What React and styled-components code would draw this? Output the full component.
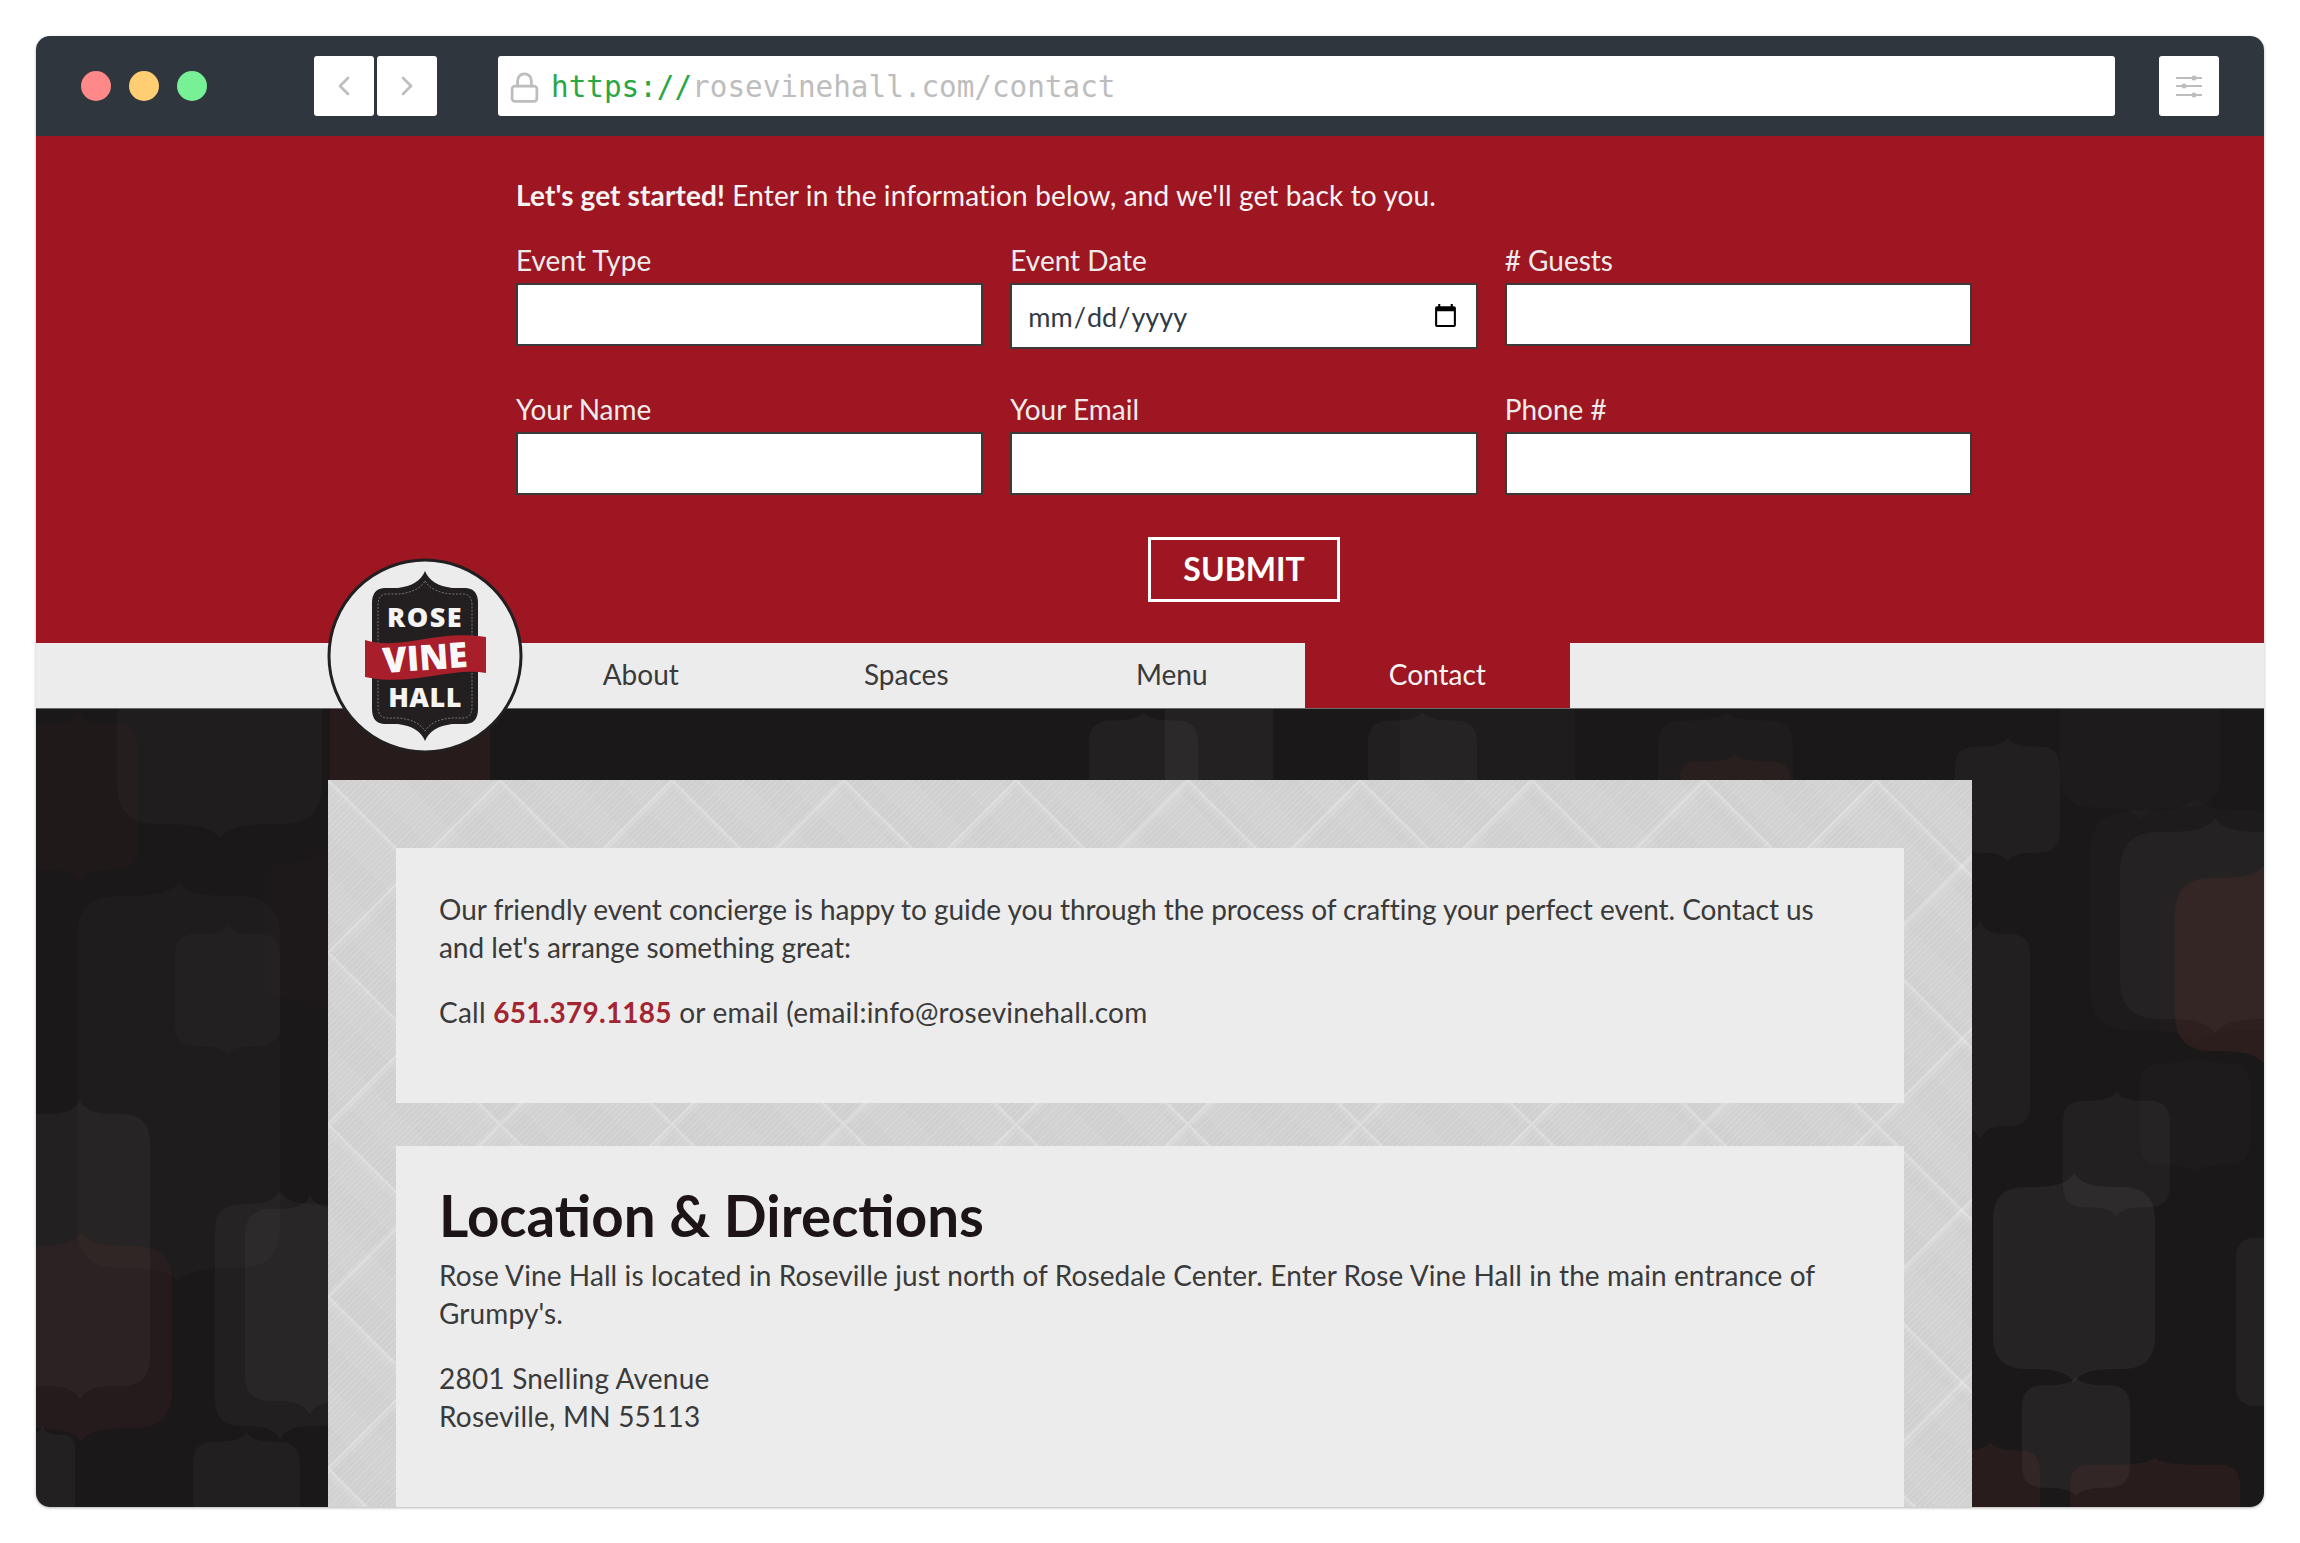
import React from "react"
import styled, { createGlobalStyle } from "styled-components"
import { ChevronLeft, ChevronRight, Lock } from "lucide-react"

const bodyFont = `"Lato", "Noto Sans", sans-serif`

const GlobalStyle = createGlobalStyle`
  html, body {
    margin: 0;
    padding: 0;
    background: #fff;
    font-family: ${bodyFont};
  }
  * {
    box-sizing: border-box;
  }
`

const Page = styled.div`
  width: 2300px;
  height: 1543px;
  padding: 36px;
  background: #fff;
`

const BrowserWindow = styled.div`
  display: flex;
  flex-direction: column;
  width: 2228px;
  height: 1471px;
  border-radius: 14px;
  overflow: hidden;
  box-shadow: 0 1px 3px rgba(0, 0, 0, 0.3);
`

const TitleBar = styled.div`
  display: flex;
  align-items: center;
  flex: 0 0 100px;
  padding: 0 45px;
  background: #2f363e;
`

const Lights = styled.div`
  display: flex;
  gap: 18px;
  margin-right: 107px;
`

const Light = styled.span`
  width: 30px;
  height: 30px;
  border-radius: 50%;
  background: ${props => props.color};
`

const NavButtons = styled.div`
  display: flex;
  gap: 3px;
  margin-right: 61px;
`

const ToolButton = styled.div`
  display: flex;
  align-items: center;
  justify-content: center;
  width: 60px;
  height: 60px;
  border-radius: 3px;
  background: #fff;
  color: #bdbdbd;
`

const AddressBar = styled.div`
  display: flex;
  align-items: center;
  flex: 1;
  height: 60px;
  margin-right: 44px;
  padding: 2px 0 0 10px;
  border-radius: 3px;
  background: #fff;
  color: #bdbdbd;
  font-family: "DejaVu Sans Mono", monospace;
  font-size: 29.3px;
  white-space: nowrap;
`

const Scheme = styled.span`
  margin-left: 10px;
  color: #27a844;
`

const FormSection = styled.section`
  flex: 0 0 507px;
  padding: 40px 292px 0 480px;
  background: #9e1622;
  color: #ececec;
`

const Intro = styled.p`
  margin: 0 0 27px;
  font-size: 28px;
  line-height: 38px;
  letter-spacing: 0.13px;
  color: #f4f4f4;
`

const FieldGrid = styled.div`
  display: grid;
  grid-template-columns: repeat(3, 1fr);
  column-gap: 27px;
  row-gap: 44px;
`

const Field = styled.label`
  display: flex;
  flex-direction: column;
  gap: 4px;
  font-size: 28px;
  line-height: 38px;
`

const TextInput = styled.input`
  width: 100%;
  height: ${props => (props.type === "date" ? "66px" : "63px")};
  margin-bottom: ${props => (props.type === "date" ? "-3px" : "0")};
  padding: 0 15px;
  border: 2px solid #3a3a3a;
  border-radius: 0;
  outline: none;
  background: #fff;
  color: #2f3a48;
  font-family: ${bodyFont};
  font-size: ${props => (props.type === "date" ? "27px" : "28px")};
`

const SubmitRow = styled.div`
  display: flex;
  justify-content: center;
  margin-top: 42px;
`

const SubmitButton = styled.button`
  width: 192px;
  height: 65px;
  padding: 0 0 3px;
  border: 3px solid #fff;
  background: transparent;
  color: #fff;
  font-family: ${bodyFont};
  font-size: 32px;
  font-weight: 700;
`

const NavBar = styled.nav`
  position: relative;
  display: flex;
  flex: 0 0 66px;
  padding-left: 472px;
  border-bottom: 1px solid #6a6a6a;
  background: #ececec;
`

const NavItem = styled.a`
  display: flex;
  align-items: center;
  justify-content: center;
  width: 265.5px;
  padding-bottom: 3px;
  font-size: 28px;
  color: ${props => (props.$active ? "#f4f4f4" : "#3a3a3a")};
  background: ${props => (props.$active ? "#9e1622" : "transparent")};
`

const LogoBadge = styled.svg`
  position: absolute;
  left: 290px;
  top: -86px;
  width: 198px;
  height: 198px;
  z-index: 2;
`

const Content = styled.main`
  position: relative;
  flex: 1;
  padding: 71px 292px 0;
  background: #1b1819;
  overflow: hidden;
`

const Backdrop = styled.svg`
  position: absolute;
  left: 0;
  top: 0;
  width: 2228px;
  height: 798px;
`

const Panel = styled.div`
  position: relative;
  display: flex;
  flex-direction: column;
  gap: 43px;
  height: 900px;
  padding: 68px;
  background-color: #d0d0d0;
  background-image:
    linear-gradient(45deg, transparent 46%, rgba(255, 255, 255, 0.1) 49%, rgba(255, 255, 255, 0.28) 50%, transparent 50.8%),
    linear-gradient(-45deg, transparent 46%, rgba(255, 255, 255, 0.1) 49%, rgba(255, 255, 255, 0.28) 50%, transparent 50.8%),
    repeating-linear-gradient(-45deg, rgba(255, 255, 255, 0.14) 0 1px, transparent 1px 4px),
    repeating-linear-gradient(45deg, rgba(255, 255, 255, 0.05) 0 30px, transparent 30px 60px);
  background-size: 172px 172px, 172px 172px, auto, auto;
`

const Card = styled.article`
  flex: 0 0 ${props => props.height};
  padding: ${props => props.$top} 43px 0;
  background: #ececec;
  color: #3a3a3a;
  font-size: 28px;
  line-height: 38px;
`

const Paragraph = styled.p`
  margin: 0 0 27px;
  letter-spacing: ${props => props.$spacing || "0"};
`

const Phone = styled.strong`
  color: #a32530;
  font-weight: 700;
`

const Heading = styled.h2`
  margin: 0 0 10px;
  color: #1c1416;
  font-size: 56.5px;
  font-weight: 700;
  line-height: 62px;
`

const lantern = (x, y, w, h) => {
  const cx = x + w / 2
  const r = Math.min(w, h) * 0.2
  const tip = Math.min(h * 0.07, 14)
  const top = y + tip
  const bottom = y + h - tip
  return [
    `M${cx} ${y}`,
    `C${cx + w * 0.04} ${top - 2} ${cx + w * 0.14} ${top} ${cx + w * 0.28} ${top}`,
    `L${x + w - r} ${top}`,
    `Q${x + w} ${top} ${x + w} ${top + r}`,
    `L${x + w} ${bottom - r}`,
    `Q${x + w} ${bottom} ${x + w - r} ${bottom}`,
    `L${cx + w * 0.28} ${bottom}`,
    `C${cx + w * 0.14} ${bottom} ${cx + w * 0.04} ${bottom + 2} ${cx} ${y + h}`,
    `C${cx - w * 0.04} ${bottom + 2} ${cx - w * 0.14} ${bottom} ${cx - w * 0.28} ${bottom}`,
    `L${x + r} ${bottom}`,
    `Q${x} ${bottom} ${x} ${bottom - r}`,
    `L${x} ${top + r}`,
    `Q${x} ${top} ${x + r} ${top}`,
    `L${cx - w * 0.28} ${top}`,
    `C${cx - w * 0.14} ${top} ${cx - w * 0.04} ${top - 2} ${cx} ${y}`,
    "Z",
  ].join(" ")
}

const GREY = "#ffffff"
const RED = "#a8463c"

// page coordinates of the faint lantern shapes behind the panel
const shapes = [
  [20, 712, 118, 170, RED, 0.035],
  [117, 640, 205, 198, GREY, 0.025],
  [77, 882, 203, 400, GREY, 0.02],
  [175, 925, 105, 130, GREY, 0.02],
  [263, 850, 120, 160, RED, 0.02],
  [10, 1100, 140, 300, GREY, 0.035],
  [-10, 1232, 182, 210, RED, 0.08],
  [215, 1190, 130, 250, GREY, 0.03],
  [245, 1195, 130, 220, GREY, 0.035],
  [193, 1432, 107, 140, GREY, 0.03],
  [10, 1425, 65, 140, GREY, 0.035],
  [330, 660, 160, 200, RED, 0.09],
  [1089, 712, 109, 120, GREY, 0.035],
  [1165, 650, 108, 180, GREY, 0.045],
  [1368, 712, 109, 120, GREY, 0.03],
  [1400, 640, 175, 190, GREY, 0.02],
  [1658, 712, 135, 120, GREY, 0.02],
  [1680, 755, 110, 90, RED, 0.07],
  [1955, 738, 105, 123, GREY, 0.03],
  [2060, 640, 160, 180, GREY, 0.015],
  [2090, 797, 210, 247, GREY, 0.015],
  [2120, 818, 190, 215, GREY, 0.03],
  [2175, 864, 180, 201, RED, 0.12],
  [2140, 1055, 110, 118, GREY, 0.015],
  [2063, 1092, 107, 124, GREY, 0.035],
  [1993, 1173, 162, 210, GREY, 0.05],
  [2236, 1224, 100, 196, GREY, 0.04],
  [2022, 1377, 108, 119, GREY, 0.05],
  [2070, 1458, 170, 100, RED, 0.1],
  [1940, 1442, 100, 120, RED, 0.1],
  [1930, 920, 100, 220, GREY, 0.03],
]

const logoShield = "M99 14 C103 24 112 29 126 31 L140 31 Q152 32 152 46 L152 152 Q152 166 140 167 L126 167 C112 169 103 174 99 184 C95 174 86 169 72 167 L58 167 Q46 166 46 152 L46 46 Q46 32 58 31 L72 31 C86 29 95 24 99 14 Z"

const logoStitch = "M99 24 C104 32 113 36 126 37 L138 37 Q146 38 146 48 L146 150 Q146 160 138 161 L126 161 C113 162 104 166 99 174 C94 166 85 162 72 161 L60 161 Q52 160 52 150 L52 48 Q52 38 60 37 L72 37 C85 36 94 32 99 24 Z"

const Logo = () => (
  <LogoBadge viewBox="0 0 198 198">
    <circle cx="99" cy="99" r="96" fill="#ececec" stroke="#231f20" strokeWidth="3" />
    <path d={logoShield} fill="#231f20" />
    <path d={logoStitch} fill="none" stroke="#8a8a8a" strokeWidth="0.8" strokeDasharray="2 1.5" />
    <text x="99" y="70" textAnchor="middle" fontFamily="Open Sans, sans-serif" fontWeight="800" fontSize="27" letterSpacing="1.5" fill="#f4f4f4">ROSE</text>
    <path
      d="M39 83 C75 94 110 72 160 80 L160 116 C125 110 85 130 39 120 Z"
      fill="#a81e2a"
    />
    <text x="99" y="113" textAnchor="middle" fontFamily="Open Sans, sans-serif" fontWeight="800" fontSize="35" fill="#f8f8f8" transform="rotate(-4 99 100)">VINE</text>
    <text x="99" y="150" textAnchor="middle" fontFamily="Open Sans, sans-serif" fontWeight="800" fontSize="27" letterSpacing="0.5" fill="#f4f4f4">HALL</text>
  </LogoBadge>
)

const SlidersIcon = () => (
  <svg width="28" height="24" viewBox="0 0 28 24" fill="#bdbdbd">
    <rect x="1" y="3" width="26" height="2" />
    <rect x="1" y="11" width="26" height="2" />
    <rect x="1" y="20" width="26" height="2" />
    <circle cx="19" cy="4" r="2.5" />
    <circle cx="9" cy="12" r="2.5" />
    <circle cx="19" cy="21" r="2.5" />
  </svg>
)

const App = () => (
  <Page>
    <GlobalStyle />
    <BrowserWindow>
      <TitleBar>
        <Lights>
          <Light color="#ff8888" />
          <Light color="#ffce73" />
          <Light color="#78f095" />
        </Lights>
        <NavButtons>
          <ToolButton>
            <ChevronLeft size={32} strokeWidth={2} />
          </ToolButton>
          <ToolButton>
            <ChevronRight size={32} strokeWidth={2} />
          </ToolButton>
        </NavButtons>
        <AddressBar>
          <Lock size={33} strokeWidth={2} />
          <Scheme>https://</Scheme>rosevinehall.com/contact
        </AddressBar>
        <ToolButton>
          <SlidersIcon />
        </ToolButton>
      </TitleBar>

      <FormSection>
        <Intro>
          <strong>Let's get started!</strong> Enter in the information below, and we'll get back to you.
        </Intro>
        <FieldGrid>
          <Field>Event Type<TextInput type="text" /></Field>
          <Field>Event Date<TextInput type="date" /></Field>
          <Field># Guests<TextInput type="text" /></Field>
          <Field>Your Name<TextInput type="text" /></Field>
          <Field>Your Email<TextInput type="text" /></Field>
          <Field>Phone #<TextInput type="text" /></Field>
        </FieldGrid>
        <SubmitRow>
          <SubmitButton>SUBMIT</SubmitButton>
        </SubmitRow>
      </FormSection>

      <NavBar>
        <Logo />
        <NavItem>About</NavItem>
        <NavItem>Spaces</NavItem>
        <NavItem>Menu</NavItem>
        <NavItem $active>Contact</NavItem>
      </NavBar>

      <Content>
        <Backdrop viewBox="36 709 2228 798">
          {shapes.map(([x, y, w, h, fill, opacity], i) => (
            <path key={i} d={lantern(x, y, w, h)} fill={fill} fillOpacity={opacity} />
          ))}
        </Backdrop>
        <Panel>
          <Card height="255px" $top="42px">
            <Paragraph $spacing="-0.05px">
              Our friendly event concierge is happy to guide you through the process of crafting your perfect event. Contact us and let's arrange something great:
            </Paragraph>
            <Paragraph $spacing="0.24px">
              Call <Phone>651.379.1185</Phone> or email (email:info@rosevinehall.com
            </Paragraph>
          </Card>
          <Card height="600px" $top="38px">
            <Heading>Location &amp; Directions</Heading>
            <Paragraph $spacing="0.1px">
              Rose Vine Hall is located in Roseville just north of Rosedale Center. Enter Rose Vine Hall in the main entrance of Grumpy's.
            </Paragraph>
            <Paragraph $spacing="0.2px">
              2801 Snelling Avenue
              <br />
              Roseville, MN 55113
            </Paragraph>
          </Card>
        </Panel>
      </Content>
    </BrowserWindow>
  </Page>
)

export default App
